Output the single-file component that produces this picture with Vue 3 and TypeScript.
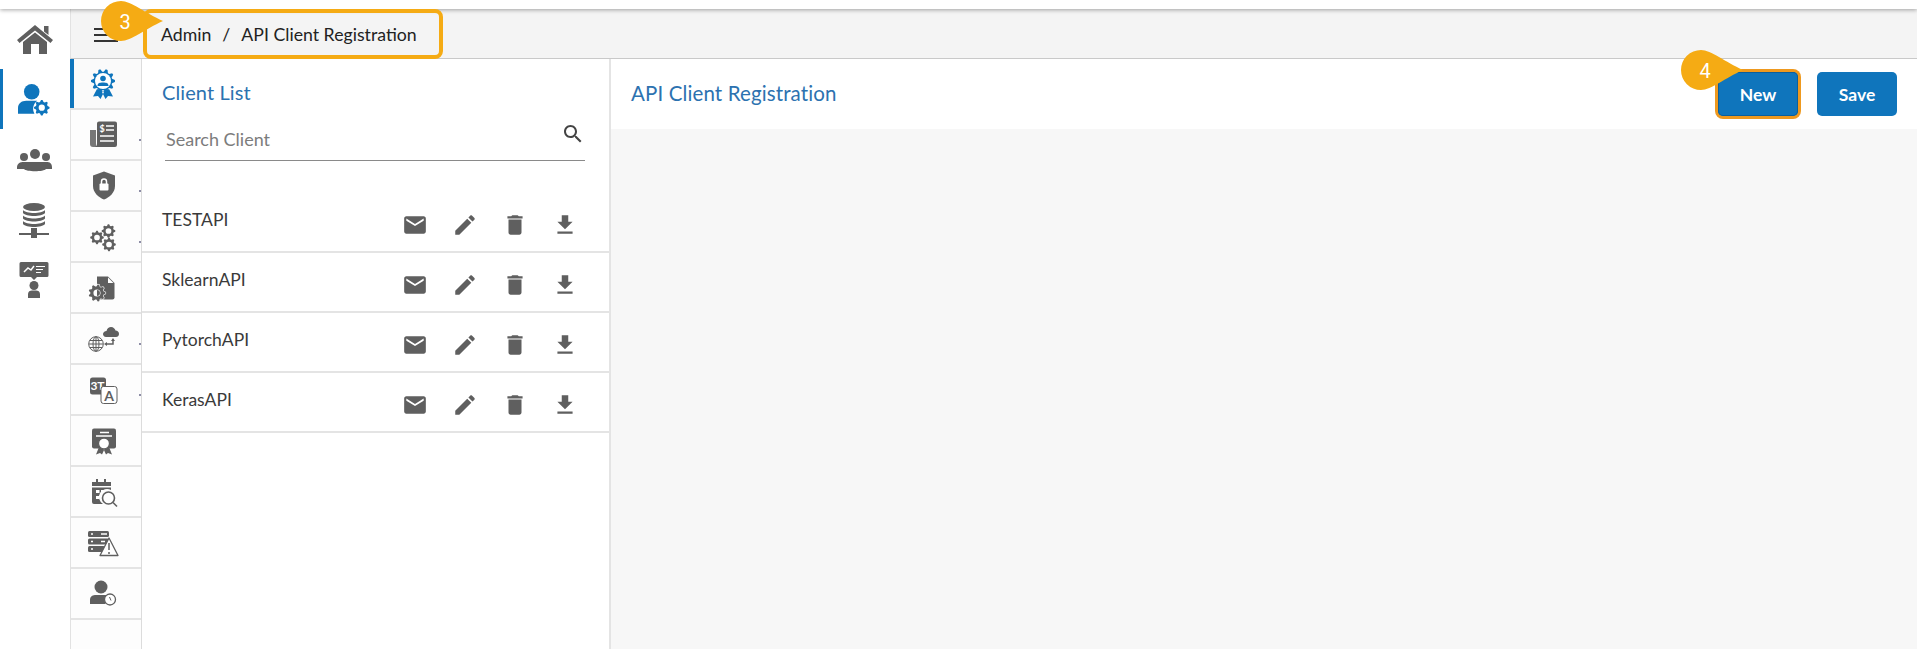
<script setup lang="ts">
function gear(cx: number, cy: number, r: number, teeth = 8, hole = 0.45): string {
  const pts: string[] = []
  const n = teeth * 4
  for (let i = 0; i < n; i++) {
    const a = ((i - 0.5) / n) * Math.PI * 2
    const rad = i % 4 < 2 ? r : r * 0.78
    pts.push(`${(cx + Math.cos(a) * rad).toFixed(2)} ${(cy + Math.sin(a) * rad).toFixed(2)}`)
  }
  if (!hole) return `M${pts.join('L')}Z`
  const h = r * hole
  return `M${pts.join('L')}Z M${cx - h} ${cy}a${h} ${h} 0 1 0 ${h * 2} 0a${h} ${h} 0 1 0 ${-h * 2} 0Z`
}
const clients: string[] = ['TESTAPI', 'SklearnAPI', 'PytorchAPI', 'KerasAPI']
</script>

<template>
  <div class="page">
    <div class="topline"></div>
    <div class="body">
      <nav class="rail">
        <div class="rail-item home">
          <svg width="36" height="30" viewBox="0 0 36 30"><path d="M18 1 L36 16 L33.500 19 L18 6.500 L2.500 19 L0 16Z M27 2h4.500v9L27 7.500Z M6 18 L18 8.500 L30 18V30H22V20H14V30H6Z" /></svg>
        </div>
        <div class="rail-item user active">
          <svg width="32" height="33" viewBox="0 0 35 35">
            <circle cx="15" cy="9" r="8.500" />
            <path d="M0 33V27C0 22 4 19 9 19H21C17 22 15 28 18 33Z" />
            <path :d="gear(26, 26.500, 8.500, 8, 0.4)" fill-rule="evenodd" />
          </svg>
        </div>
        <div class="rail-item group">
          <svg width="36" height="24" viewBox="0 0 36 24">
            <circle cx="7" cy="9" r="4" /><circle cx="18" cy="6" r="5" /><circle cx="29" cy="9" r="4" />
            <path d="M0 20C0 15 3 14 7 14H29C33 14 35 15 35 20V21H29C27 24 9 24 7 21H0Z" />
          </svg>
        </div>
        <div class="rail-item db">
          <svg width="32" height="36" viewBox="0 0 32 36">
            <ellipse cx="15" cy="4" rx="11" ry="4" />
            <path d="M4 7C7 11 23 11 26 7V10C23 14 7 14 4 10ZM4 12.500C7 16.500 23 16.500 26 12.500V15.500C23 19.500 7 19.500 4 15.500ZM4 18C7 22 23 22 26 18V21C23 25 7 25 4 21Z" />
            <path d="M12 25h6v5h12v2H18v3h-6v-3H0v-2h12Z" />
          </svg>
        </div>
        <div class="rail-item board">
          <svg width="32" height="36" viewBox="0 0 32 36">
            <path d="M2 0H28a1.500 1.500 0 0 1 1.500 1.500V13.500a1.500 1.500 0 0 1-1.500 1.500H18L15 18L12 15H2A1.500 1.500 0 0 1 .5 13.500V1.500A1.500 1.500 0 0 1 2 0Z" />
            <path class="cut" d="M5 10L9 6L12 8L15 4" />
            <path class="cut thin" d="M17 4.500H26M17 7.500H24M17 10.500H22" />
            <circle cx="15" cy="23.500" r="4.500" />
            <path d="M9 36V32C9 29.500 11 28.500 13 28.500H17C19 28.500 21 29.500 21 32V36Z" />
          </svg>
        </div>
      </nav>

      <div class="main">
        <header class="crumbbar">
          <div class="burger"><i></i><i></i><i></i></div>
          <div class="crumbs">
            <span>Admin</span><span class="sep">/</span><span>API Client Registration</span>
          </div>
        </header>

        <div class="content">
          <aside class="subrail">
            <div class="sub active">
              <svg width="40" height="40" viewBox="0 0 40 40">
                <path d="M11 25L7 32.500L12 32L14.500 35L18 28ZM23 25L27 32.500L22 32L19.500 35L16 28Z" />
                <path :d="gear(17, 17, 12, 10, 0)" />
                <circle class="ring" cx="17" cy="17" r="8" />
                <circle cx="17" cy="14.500" r="2.800" />
                <path d="M11.500 22C11.500 19 13.500 18.500 17 18.500S22.500 19 22.500 22Z" />
              </svg>
            </div>
            <div class="sub tick">
              <svg width="40" height="40" viewBox="0 0 40 40">
                <path d="M4 15H10V32H7A3 3 0 0 1 4 29Z" opacity=".85" />
                <path d="M11 8.500A2 2 0 0 1 13 6.500H29A2 2 0 0 1 31 8.500V30A2 2 0 0 1 29 32H9C10.500 31 11 30 11 28Z" />
                <text x="13.500" y="17" class="dollar">$</text>
                <path class="cut" d="M20 11H28M20 15H28M14 21H28M14 26H28" />
              </svg>
            </div>
            <div class="sub tick">
              <svg width="40" height="40" viewBox="0 0 40 40">
                <path d="M18 5.500L29 9.500V20C29 27 23 31.500 18 33.500C13 31.500 7 27 7 20V9.500Z" />
                <path class="cut" d="M15.500 18v-2.500a2.500 2.500 0 0 1 5 0V18" />
                <rect class="solid" x="13.500" y="17.500" width="9" height="7" rx="1" />
              </svg>
            </div>
            <div class="sub tick">
              <svg width="40" height="40" viewBox="0 0 40 40" fill-rule="evenodd">
                <path :d="gear(22.500, 14, 6.800, 8, 0.42)" />
                <path :d="gear(11, 20.500, 6.800, 8, 0.42)" />
                <path :d="gear(23, 27.500, 6.800, 8, 0.42)" />
              </svg>
            </div>
            <div class="sub">
              <svg width="40" height="40" viewBox="0 0 40 40">
                <path d="M11 8.500H22L28.500 15V29.500A2 2 0 0 1 26.500 31.500H11Z" />
                <path class="ring" d="M22 9.500L27.500 15H22Z" />
                <path class="halo" :d="gear(11, 25, 8.500, 9, 0.42)" fill-rule="evenodd" />
              </svg>
            </div>
            <div class="sub tick">
              <svg width="40" height="40" viewBox="0 0 40 40">
                <path d="M20 18C18 18 17 16.500 17 15C17 13.500 18.500 12 20.500 12C21 9.500 23 8 25 8C27.500 8 29 10 29.500 11.500C31.500 11.500 33 13 33 15C33 17 31.500 18 30 18Z" />
                <g class="globe">
                  <circle cx="10" cy="25" r="7.300" />
                  <ellipse cx="10" cy="25" rx="3" ry="7.300" />
                  <path d="M3 25H17M4 21.500H16M4 28.500H16M10 18V32" />
                </g>
                <path class="arrow" d="M27 21V25H20" />
                <path d="M25 22H29L27 19ZM21 23V27L18 25Z" />
              </svg>
            </div>
            <div class="sub tick">
              <svg width="40" height="40" viewBox="0 0 40 40">
                <rect x="4" y="7.500" width="16" height="17" rx="2.500" />
                <text x="11.500" y="20" class="hi">3T</text>
                <rect class="ring line" x="15" y="16.500" width="16" height="17" rx="2.500" />
                <text x="23" y="31" class="aa">A</text>
              </svg>
            </div>
            <div class="sub">
              <svg width="40" height="40" viewBox="0 0 40 40">
                <rect x="6" y="7.500" width="24" height="20" rx="2" />
                <path class="cut" d="M14 11.500H23M10 15H26" />
                <path d="M13 26L10 33.500L14 32L16 33.500L19 27ZM23 26L26 33.500L22 32L20 33.500L17 27Z" />
                <circle class="ring stroke" cx="18" cy="22.500" r="5.500" />
              </svg>
            </div>
            <div class="sub">
              <svg width="40" height="40" viewBox="0 0 40 40">
                <g transform="translate(0 4)">
                  <path d="M6 6H10V3H12V6H18V3H20V6H25V10H6ZM6 11.500H25V14A8 8 0 0 0 17 28H8A2 2 0 0 1 6 26Z" fill-rule="evenodd" />
                  <rect class="solid" x="10" y="14" width="3.500" height="3" /><rect class="solid" x="15" y="14" width="3" height="3" /><rect class="solid" x="10" y="20" width="3.500" height="3" />
                  <circle class="lens" cx="22.500" cy="22" r="6" />
                  <path class="lens" d="M27 26.500L31 30.500" />
                </g>
              </svg>
            </div>
            <div class="sub">
              <svg width="40" height="40" viewBox="0 0 40 40">
                <g transform="translate(-1 4)">
                  <rect x="3" y="4" width="21" height="6" rx="1.500" /><rect x="3" y="11.500" width="21" height="6" rx="1.500" /><rect x="3" y="19" width="17" height="6" rx="1.500" />
                  <path class="cut" d="M6 7H8M6 14.500H8M6 22H8M16 7H22M16 14.500H20" />
                  <path class="tri" d="M24 11L33 28.500H15Z" />
                  <path class="mark" d="M24 16V23M24 25V27" />
                </g>
              </svg>
            </div>
            <div class="sub">
              <svg width="40" height="40" viewBox="0 0 40 40">
                <circle cx="15" cy="13" r="6.500" />
                <path d="M4 30V26C4 22 7 21 10 21H21C19 24 18.500 27 19.500 30Z" />
                <circle class="ring stroke" cx="24" cy="25.500" r="5.500" />
                <path class="clockhand" d="M23.500 23L25 26.500" />
              </svg>
            </div>
          </aside>

          <section class="list">
            <h2 class="title">Client List</h2>
            <div class="search">
              <span>Search Client</span>
              <svg width="24" height="24" viewBox="0 0 24 24"><path d="M15.500 14h-.79l-.28-.27C15.410 12.590 16 11.110 16 9.500 16 5.910 13.090 3 9.500 3S3 5.910 3 9.500 5.910 16 9.500 16c1.610 0 3.090-.59 4.230-1.570l.27.28v.79l5 4.990L20.490 19l-4.990-5zm-6 0C7.010 14 5 11.990 5 9.500S7.010 5 9.500 5 14 7.010 14 9.500 11.990 14 9.500 14z" /></svg>
            </div>
            <div class="rows">
              <div v-for="c in clients" :key="c" class="row">
                <span class="name">{{ c }}</span>
                <div class="actions">
                  <svg width="26" height="26" viewBox="0 0 24 24"><path d="M20 4H4c-1.100 0-2 .9-2 2v12c0 1.100.9 2 2 2h16c1.100 0 2-.9 2-2V6c0-1.100-.9-2-2-2zm0 4l-8 5-8-5V6l8 5 8-5v2z" /></svg>
                  <svg width="26" height="26" viewBox="0 0 24 24"><path d="M3 17.250V21h3.750L17.810 9.940l-3.750-3.750L3 17.250zM20.710 7.040c.39-.39.39-1.020 0-1.410l-2.340-2.340c-.39-.39-1.020-.39-1.410 0l-1.830 1.830 3.750 3.750 1.830-1.830z" /></svg>
                  <svg width="26" height="26" viewBox="0 0 24 24"><path d="M6 19c0 1.100.9 2 2 2h8c1.100 0 2-.9 2-2V7H6v12zM19 4h-3.500l-1-1h-5l-1 1H5v2h14V4z" /></svg>
                  <svg width="26" height="26" viewBox="0 0 24 24"><path d="M19 9h-4V3H9v6H5l7 7 7-7zM5 18v2h14v-2H5z" /></svg>
                </div>
              </div>
            </div>
          </section>

          <section class="detail">
            <div class="detail-head">
              <h2 class="title">API Client Registration</h2>
              <div class="buttons">
                <button class="btn outlined">New</button>
                <button class="btn">Save</button>
              </div>
            </div>
          </section>
        </div>
      </div>
    </div>

    <div class="badge b3">
      <svg width="62" height="40" viewBox="0 0 62 40"><path d="M20 0C30 0 44 12 62 20C44 28 30 40 20 40A20 20 0 0 1 20 0Z" /></svg>
      <span>3</span>
    </div>
    <div class="badge b4">
      <svg width="62" height="40" viewBox="0 0 62 40"><path d="M20 0C30 0 44 12 62 20C44 28 30 40 20 40A20 20 0 0 1 20 0Z" /></svg>
      <span>4</span>
    </div>
  </div>
</template>

<style>
html, body { margin: 0; background: #fff; }
</style>

<style scoped>
.page {
  position: relative;
  width: 1917px;
  height: 649px;
  overflow: hidden;
  display: flex;
  flex-direction: column;
  font-family: Lato, "Open Sans", sans-serif;
  background: #fff;
}
.topline {
  position: relative;
  z-index: 2;
  height: 9px;
  flex: none;
  background: #fff;
  box-shadow: 0 1px 4px rgba(0, 0, 0, 0.35);
}
.body { flex: 1; display: flex; min-height: 0; }
svg { fill: #5f5f5f; display: block; }

.rail { width: 70px; flex: none; background: #fff; position: relative; padding-top: 15px; box-sizing: border-box; }
.rail-item { display: flex; justify-content: center; position: relative; }
.rail-item.home { height: 45px; padding-right: 1px; }
.rail-item.user { height: 60px; align-items: center; justify-content: flex-start; padding-left: 18px; box-sizing: border-box; }
.rail-item.user svg { fill: #0f75bc; }
.rail-item.user::before {
  content: "";
  position: absolute;
  left: 0; top: 0; bottom: 0;
  width: 3px;
  background: #0f75bc;
}
.rail-item.group { height: 54px; padding-top: 19px; box-sizing: border-box; }
.rail-item.db { height: 79px; padding-top: 20px; box-sizing: border-box; }
.cut { fill: none; stroke: #fff; stroke-width: 1.500; }
.cut.thin { stroke-width: 1; }

.main { flex: 1; display: flex; flex-direction: column; min-width: 0; }
.crumbbar {
  height: 50px;
  flex: none;
  box-sizing: border-box;
  background: #f4f4f4;
  border-bottom: 1px solid #c9c9c9;
  border-left: 1px solid #e2e2e2;
  display: flex;
  align-items: center;
}
.burger { width: 24px; margin-left: 23px; display: flex; flex-direction: column; gap: 4px; margin-top: 2px; }
.burger i { display: block; height: 2px; background: #333; }
.crumbs {
  position: relative;
  z-index: 3;
  margin-left: 25px;
  margin-top: 1px;
  width: 300px;
  height: 50px;
  box-sizing: border-box;
  border: 4px solid #f5ab14;
  border-radius: 8px;
  padding-left: 14px;
  display: flex;
  align-items: center;
  font-size: 17.700px;
  color: #222;
}
.sep { margin: 0 11px 0 11px; }

.content { flex: 1; display: flex; min-height: 0; }
.subrail {
  width: 72px;
  flex: none;
  box-sizing: border-box;
  border-left: 1px solid #e2e2e2;
  border-right: 1px solid #dcdcdc;
  background: #fdfdfd;
}
.sub {
  position: relative;
  height: 51px;
  box-sizing: border-box;
  border-bottom: 2px solid #e4e4e4;
  display: flex;
  align-items: center;
  padding-left: 15px;
}
.sub.active { background: #fafafa; }
.sub.active::before {
  content: "";
  position: absolute;
  left: -1px; top: 0; bottom: 0;
  width: 4px;
  background: #0f75bc;
}
.sub.active svg { fill: #0f75bc; }
.sub.tick::after {
  content: "";
  position: absolute;
  right: 0; top: 29px;
  width: 2px;
  height: 2px;
  background: #8d8da6;
}
.ring { fill: #fff; }
.ring.line { stroke: #5f5f5f; stroke-width: 1; }
.ring.stroke { stroke: #5f5f5f; stroke-width: 1.300; }
.solid { fill: #fff; }
.dollar { font: 700 9px Lato, sans-serif; fill: #fff; }
.hi { font: 700 12px Lato, sans-serif; fill: #fff; text-anchor: middle; }
.aa { font: 700 14px Lato, sans-serif; fill: #5f5f5f; text-anchor: middle; }
.halo { stroke: #fff; stroke-width: 1.200; paint-order: stroke; }
.globe { fill: none; stroke: #5f5f5f; stroke-width: 1; }
.arrow { fill: none; stroke: #5f5f5f; stroke-width: 1.500; }
.lens { fill: #fff; stroke: #5f5f5f; stroke-width: 1.600; }
.tri { fill: #fff; stroke: #5f5f5f; stroke-width: 1.300; stroke-linejoin: round; }
.mark { fill: none; stroke: #5f5f5f; stroke-width: 1.500; }
.clockhand { fill: none; stroke: #5f5f5f; stroke-width: 1; }

.list {
  width: 469px;
  flex: none;
  box-sizing: border-box;
  border-right: 2px solid #e4e4e4;
  background: #fff;
}
.title { margin: 0; font-weight: 400; font-size: 20px; color: #2c72b0; letter-spacing: .1px; }
.list .title { padding: 22px 0 0 20px; line-height: 22px; }
.search {
  margin: 16px 24px 0 23px;
  height: 42px;
  box-sizing: border-box;
  border-bottom: 1px solid #8a8a8a;
  display: flex;
  justify-content: space-between;
  padding: 0 0 10px 1px;
  font-size: 18px;
  line-height: 22px;
  color: #7c7c7c;
  align-items: flex-end;
}
.search svg { fill: #444; margin-bottom: 4px; }
.rows { margin-top: 32px; }
.row {
  height: 60px;
  box-sizing: border-box;
  border-bottom: 2px solid #e4e4e4;
  display: flex;
  justify-content: space-between;
  padding: 0 31px 0 20px;
}
.name { font-size: 17.500px; color: #3a3a3a; margin-top: 16px; line-height: 22px; }
.actions { display: flex; gap: 24px; margin-top: 18.500px; }

.detail { flex: 1; background: #f7f7f7; min-width: 0; }
.detail-head {
  height: 70px;
  background: #fff;
  display: flex;
  justify-content: space-between;
  align-items: center;
  padding: 0 20px 0 20px;
}
.detail-head .title { margin-top: -3px; font-size: 20.500px; letter-spacing: .12px; }
.buttons { display: flex; gap: 19px; }
.btn {
  width: 80px;
  height: 44px;
  box-sizing: border-box;
  border: none;
  border-radius: 5px;
  background: #0f75bc;
  color: #fff;
  font: 700 17.500px Lato, sans-serif;
  padding: 0;
}
.btn.outlined { box-shadow: 0 0 0 3px #ee991f, inset 0 0 0 1px #0b5f9c; border-radius: 5px; }

.badge {
  position: absolute;
  z-index: 5;
  width: 62px;
  height: 40px;
}
.badge svg { fill: #f5ab14; }
.badge span {
  position: absolute;
  left: 0;
  top: 0;
  width: 48px;
  height: 41px;
  display: flex;
  align-items: center;
  justify-content: center;
  color: #fff;
  font: 400 20px Roboto, sans-serif;
}
.b3 { left: 101px; top: 1px; }
.b4 { left: 1681px; top: 50px; }
</style>
